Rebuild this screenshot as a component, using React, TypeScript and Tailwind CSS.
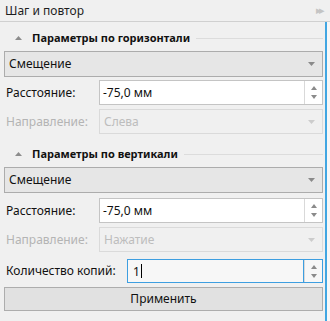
const font = { fontFamily: '"Noto Sans", "Open Sans", sans-serif' }

function Arrow({ disabled }: { disabled?: boolean }) {
	return (
		<svg width="7" height="4" viewBox="0 0 7 4" className="mr-[7px]">
			<path d="M0 0 L7 0 L3.5 4 Z" fill={disabled ? "#cccccc" : "#8a8a8a"} />
		</svg>
	)
}

function Spinner() {
	return (
		<div className="flex h-full w-[18px] flex-col items-center justify-center gap-[5px] border-l border-[#d9d9d9]">
			<svg width="6" height="4" viewBox="0 0 6 4">
				<path d="M0 4 L6 4 L3 0 Z" fill="#8a8a8a" />
			</svg>
			<svg width="6" height="4" viewBox="0 0 6 4">
				<path d="M0 0 L6 0 L3 4 Z" fill="#8a8a8a" />
			</svg>
		</div>
	)
}

function Section({ title }: { title: string }) {
	return (
		<div className="flex h-[22px] items-center">
			<svg width="7" height="4" viewBox="0 0 7 4" className="ml-[11px] mr-[10px]">
				<path d="M0 4 L7 4 L3.5 0 Z" fill="#8c8c8c" />
			</svg>
			<span className="text-[11px] font-bold text-[#111]">{title}</span>
			<div className="ml-[6px] h-px flex-1 bg-[#dcdcdc]" />
		</div>
	)
}

function Select({ value }: { value: string }) {
	return (
		<div className="flex h-[26px] items-center justify-between border border-[#acacac] bg-[#e6e6e6] pl-[4px] text-[12px] text-[#111]">
			<span>{value}</span>
			<Arrow />
		</div>
	)
}

function DistanceRow() {
	return (
		<div className="mt-[3px] flex h-[25px] items-center">
			<span className="w-[95px] shrink-0 pl-[2px] text-[12px] text-[#111]">Расстояние:</span>
			<div className="flex h-full flex-1 items-center border border-[#c4c4c4] bg-white">
				<span className="flex-1 pl-[3px] text-[12px] text-[#111]">-75,0 мм</span>
				<Spinner />
			</div>
		</div>
	)
}

function DirectionRow({ value }: { value: string }) {
	return (
		<div className="mt-[4px] flex h-[25px] items-center">
			<span className="w-[95px] shrink-0 pl-[2px] text-[12px] text-[#b4b4b4]">Направление:</span>
			<div className="flex h-full flex-1 items-center justify-between border border-[#dadada] bg-[#f0f0f0]">
				<span className="pl-[4px] text-[12px] text-[#bdbdbd]">{value}</span>
				<Arrow disabled />
			</div>
		</div>
	)
}

export default function App() {
	return (
		<div className="flex h-[321px] w-[330px] flex-col bg-[#f0f0f0]" style={font}>
			<div className="flex h-[22px] items-center justify-between border-b border-[#d0d0d0] bg-[#f0f0f0] pl-[5px] pr-[8px]">
				<span className="text-[12px] text-[#1e1e1e]">Шаг и повтор</span>
				<span className="text-[11px] tracking-[-3px] text-[#c4c4c4]">▸▸</span>
			</div>
			<div className="flex flex-1">
				<div className="flex flex-1 flex-col pl-[4px] pr-[2px] pt-[5px]">
					<Section title="Параметры по горизонтали" />
					<div className="mt-[2px]">
						<Select value="Смещение" />
					</div>
					<DistanceRow />
					<DirectionRow value="Слева" />
					<div className="mt-[9px]">
						<Section title="Параметры по вертикали" />
					</div>
					<div className="mt-[2px]">
						<Select value="Смещение" />
					</div>
					<div className="mt-[2px]">
						<DistanceRow />
					</div>
					<DirectionRow value="Нажатие" />
					<div className="mt-[7px] flex h-[24px] items-center">
						<span className="w-[123px] shrink-0 whitespace-nowrap pl-[2px] text-[12px] text-[#111]">Количество копий:</span>
						<div className="flex h-full flex-1 items-center border border-[#3d9ee0] bg-[#f7f7f7]">
							<span className="flex-1 pl-[5px] text-[12px] text-[#111]">
								1<span className="ml-px inline-block h-[14px] w-px translate-y-[2px] bg-black" />
							</span>
							<div className="h-full border-l border-[#3d9ee0]">
								<Spinner />
							</div>
						</div>
					</div>
					<div className="mt-[4px] flex h-[24px] items-center justify-center border border-[#adadad] bg-[#e1e1e1] text-[12px] text-[#111]">
						Применить
					</div>
				</div>
				<div className="w-[2px] bg-[#41a6e2]" />
				<div className="w-[3px] bg-[#f7f7f7]" />
			</div>
		</div>
	)
}
